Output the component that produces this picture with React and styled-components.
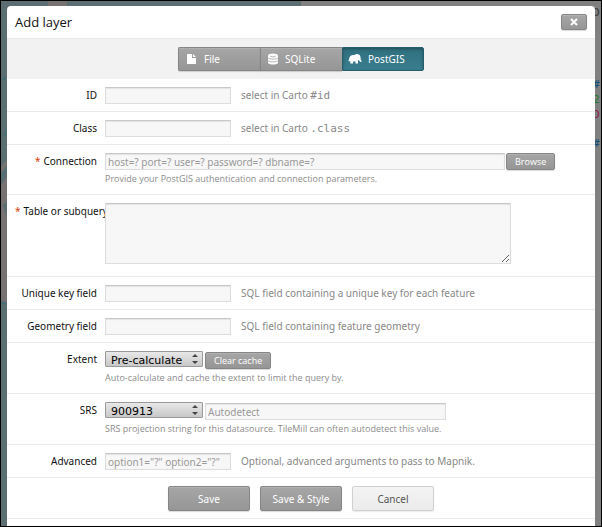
import React from "react";
import styled, { createGlobalStyle, css } from "styled-components";

const Global = createGlobalStyle`
  *, *::before, *::after { box-sizing: border-box; }
  body { margin: 0; }
  body, button, input, select, textarea { font-family: "Noto Sans", "Open Sans", sans-serif; }
`;

const Screen = styled.div`
  position: relative;
  height: 100vh;
  padding: 5px 6px 0;
  overflow: hidden;
  border: 1px solid #000;
  background: linear-gradient(90deg, #5b6e72 50%, #808080 50%);
`;

const MapArt = styled.svg`
  position: absolute;
  top: 0;
  left: 0;
`;

const Code = styled.pre`
  position: absolute;
  top: -11px;
  right: 0;
  width: 100px;
  height: 160px;
  margin: 0;
  overflow: hidden;
  font: 11px/15px "DejaVu Sans Mono", monospace;
  color: #333;
`;

const CodeLine = styled.span`
  position: absolute;
  top: ${(p) => p.$top}px;
  left: ${(p) => p.$left}px;
  color: ${(p) => p.$color};
`;

const Modal = styled.form`
  position: relative;
  min-height: 100%;
  border-radius: 4px 4px 0 0;
  background: #fff;
`;

const Header = styled.header`
  display: flex;
  align-items: center;
  justify-content: space-between;
  height: 32px;
  padding: 0 8px;
`;

const Title = styled.h1`
  margin: 0;
  font-family: "Open Sans", sans-serif;
  font-size: 13px;
  font-weight: 400;
  line-height: 20px;
  color: #111;
`;

const Toolbar = styled.nav`
  display: flex;
  justify-content: center;
  padding: 8px 0;
  border-top: 1px solid #e8e8e8;
  background: #f2f2f2;
`;

const grey = css`
  border: 1px solid #868686;
  border-radius: 2px;
  background: linear-gradient(#a6a6a6, #969696);
  box-shadow: inset 0 1px 0 #b0b0b0, 0 1px 1px rgba(0, 0, 0, 0.15);
  color: #fff;
`;

const Tab = styled.button`
  ${grey}
  display: flex;
  align-items: center;
  gap: 6px;
  width: 82px;
  height: 24px;
  padding: 0 5px;
  border-right-width: 0;
  border-radius: 0;
  font-size: 10px;
  &:first-child { padding-left: 6px; border-radius: 2px 0 0 2px; }
  &:nth-child(2) { padding-left: 6px; }
  &:last-child { border-right-width: 1px; border-radius: 0 2px 2px 0; }
  ${(p) => p.$active && css`
    border-color: #245d6b;
    background: linear-gradient(#2f6f7e, #3a7f8f);
    box-shadow: inset 0 1px 3px rgba(0, 0, 0, 0.3);
  `}
`;

const CloseButton = styled.button`
  ${grey}
  display: flex;
  align-items: center;
  justify-content: center;
  width: 26px;
  height: 16px;
  padding: 0;
`;

const SmallButton = styled.button`
  ${grey}
  height: 17px;
  padding: 0 8px;
  font-family: "Open Sans", sans-serif;
  font-size: 9px;
  line-height: 15px;
  white-space: nowrap;
`;

const Row = styled.div`
  display: grid;
  grid-template-columns: 90px 1fr;
  column-gap: 8px;
  padding: 8px 0 ${(p) => p.$bottom || 7}px;
  border-bottom: 1px solid #ebebeb;
`;

const Label = styled.label`
  display: flex;
  justify-content: ${(p) => (p.$wide ? "flex-start" : "flex-end")};
  gap: 3px;
  padding-left: 8px;
  font-size: 10px;
  line-height: 16px;
  white-space: nowrap;
  color: #111;
`;

const Star = styled.span`
  color: #d63c0c;
`;

const Field = styled.div`
  position: relative;
  min-width: 0;
`;

const Line = styled.div`
  display: flex;
  align-items: flex-end;
  gap: ${(p) => p.$gap || 2}px;
`;

const box = css`
  border: 1px solid #ddd;
  border-top-color: #c8c8c8;
  border-radius: 0;
  outline: 0;
  background: #f7f7f7;
  box-shadow: inset 0 1px 1px rgba(0, 0, 0, 0.08);
  color: #222;
  font-size: 10px;
  &::placeholder { color: #999; opacity: 1; }
`;

const widths = { short: "126px", medium: "241px", long: "400px" };

const Input = styled.input`
  ${box}
  width: ${(p) => widths[p.$size || "short"]};
  height: 17px;
  padding: 0 2px;
`;

const TextArea = styled.textarea`
  ${box}
  display: block;
  width: 406px;
  height: 61px;
  resize: both;
`;

const SelectWrap = styled.span`
  position: relative;
  display: flex;
  padding-bottom: 2px;
`;

const Select = styled.select`
  appearance: none;
  width: 98px;
  height: 16px;
  padding: 1px 5px 0;
  border: 1px solid #999;
  border-radius: 1px;
  background: linear-gradient(#e8e8e8, #c8c8c8);
  color: #000;
  font-family: "DejaVu Sans", sans-serif;
  font-size: 11px;
  line-height: 16px;
`;

const Arrows = styled.svg`
  position: absolute;
  top: 3px;
  right: 5px;
  pointer-events: none;
`;

const Hint = styled.span`
  font-size: 10px;
  line-height: 17px;
  color: #888;
  code { font: 11px "DejaVu Sans Mono", monospace; }
`;

const Note = styled.p`
  margin: 3px 0 0;
  font-family: "Open Sans", sans-serif;
  font-size: 9px;
  line-height: 12px;
  color: #8c8c8c;
`;

const Footer = styled.footer`
  display: flex;
  justify-content: center;
  gap: 10px;
  padding: 8px 0 7px;
  border-bottom: 1px solid #ebebeb;
`;

const Action = styled.button`
  ${grey}
  width: 82px;
  height: 25px;
  padding: 0;
  font-size: 10px;
  ${(p) => p.$light && css`
    border-color: #d0d0d0;
    background: linear-gradient(#f4f4f4, #ebebeb);
    box-shadow: 0 1px 1px rgba(0, 0, 0, 0.08);
    color: #555;
  `}
`;

const FileIcon = () => (
  <svg width="13" height="12" viewBox="0 0 13 12" fill="#fff" aria-hidden="true">
    <path d="M2 1h5v4h4v6h-9zM8 1l3 3h-3z" />
  </svg>
);

const DatabaseIcon = () => (
  <svg width="12" height="12" viewBox="0 0 12 12" aria-hidden="true">
    <path d="M1 2.5C1 -.3 11 -.3 11 2.500v7c0 2.800-10 2.800-10 0z" fill="#fff" />
    <path d="M3 3c2 1.200 4 1.200 6 0M1 4.800c1 1.800 9 1.800 10 0M1 7.500c1 1.800 9 1.800 10 0" fill="none" stroke="#a0a0a0" strokeWidth=".8" />
  </svg>
);

const ElephantIcon = () => (
  <svg width="14" height="12" viewBox="0 0 14 12" fill="#fff" aria-hidden="true">
    <path d="M.2 7.800C1 7.500 1 6.500 1.300 5C1.800 2.500 4 1.500 6.500 2C7.500.8 10 .8 11.200 1.700C12.500 2.500 12.600 4.500 12.700 6C12.800 7.500 13.200 8 14 7.800C13.800 9.200 12 9.400 11.300 7.800L10.800 7L10 7.500V10.500H7.500V8.500H5V10.500H2.300V7.500C1.800 8.600 1 8.800.2 7.800z" />
  </svg>
);

const SelectField = ({ id, value }) => (
  <SelectWrap>
    <Select id={id} defaultValue={value}>
      <option>{value}</option>
    </Select>
    <Arrows width="6" height="10" viewBox="0 0 6 10" aria-hidden="true">
      <path d="M0 3L3 0l3 3zM0 7l3 3 3-3z" fill="#444" />
    </Arrows>
  </SelectWrap>
);

const FormRow = ({ id, label, required, wide, bottom, note, gap, children }) => (
  <Row $bottom={bottom}>
    <Label htmlFor={id} $wide={wide}>
      {required && <Star>*</Star>}
      {label}
    </Label>
    <Field>
      <Line $gap={gap}>{children}</Line>
      {note && <Note>{note}</Note>}
    </Field>
  </Row>
);

const codeLines = [
  { top: 15, left: 92, color: "#333", text: "D" },
  { top: 87, left: 92, color: "#164e78", text: "#" },
  { top: 102, left: 92, color: "#217a21", text: "2" },
  { top: 117, left: 92, color: "#8c1a4b", text: "D" },
  { top: 146, left: 92, color: "#164e78", text: "#" },
];

export default function App() {
  return (
    <>
      <Global />
      <Screen>
        <MapArt width="100" height="527" aria-hidden="true">
          <path d="M47 0h19v5H47zM0 165l6-6v6l-6 6zM0 184l6-8v24l-4 4 4 12v8l-6 6zM0 230l6-6v78l-6-3z" fill="#777272" />
          <path d="M0 79l4-3v3M6 128l-3 5 3 2M0 176l6-7M0 302l6 1" fill="none" stroke="#3d6f78" />
        </MapArt>
        <Code aria-hidden="true">
          {codeLines.map((l) => (
            <CodeLine key={l.top} $top={l.top} $left={l.left} $color={l.color}>{l.text}</CodeLine>
          ))}
        </Code>
        <Modal onSubmit={(e) => e.preventDefault()}>
          <Header>
            <Title>Add layer</Title>
            <CloseButton type="button" aria-label="Close">
              <svg width="8" height="8" viewBox="0 0 8 8" aria-hidden="true">
                <path d="M1 1l6 6M7 1L1 7" stroke="#fff" strokeWidth="2" />
              </svg>
            </CloseButton>
          </Header>
          <Toolbar>
            <Tab type="button"><FileIcon />File</Tab>
            <Tab type="button"><DatabaseIcon />SQLite</Tab>
            <Tab type="button" $active><ElephantIcon />PostGIS</Tab>
          </Toolbar>
          <FormRow id="layer-id" label="ID" gap={10}>
            <Input id="layer-id" />
            <Hint>select in Carto <code>#id</code></Hint>
          </FormRow>
          <FormRow id="layer-class" label="Class" gap={10}>
            <Input id="layer-class" />
            <Hint>select in Carto <code>.class</code></Hint>
          </FormRow>
          <FormRow id="connection" label="Connection" required bottom={9} gap={1} note="Provide your PostGIS authentication and connection parameters.">
            <Input id="connection" $size="long" placeholder="host=? port=? user=? password=? dbname=?" />
            <SmallButton type="button">Browse</SmallButton>
          </FormRow>
          <FormRow id="table" label="Table or subquery" required wide bottom={12}>
            <TextArea id="table" />
          </FormRow>
          <FormRow id="unique-key" label="Unique key field" gap={10}>
            <Input id="unique-key" />
            <Hint>SQL field containing a unique key for each feature</Hint>
          </FormRow>
          <FormRow id="geometry" label="Geometry field" gap={10}>
            <Input id="geometry" />
            <Hint>SQL field containing feature geometry</Hint>
          </FormRow>
          <FormRow id="extent" label="Extent" bottom={9} note="Auto-calculate and cache the extent to limit the query by.">
            <SelectField id="extent" value="Pre-calculate" />
            <SmallButton type="button">Clear cache</SmallButton>
          </FormRow>
          <FormRow id="srs" label="SRS" bottom={9} note="SRS projection string for this datasource. TileMill can often autodetect this value.">
            <SelectField id="srs" value="900913" />
            <Input $size="medium" aria-label="SRS projection string" placeholder="Autodetect" />
          </FormRow>
          <FormRow id="advanced" label="Advanced" gap={10}>
            <Input id="advanced" placeholder={'option1="?" option2="?"'} />
            <Hint>Optional, advanced arguments to pass to Mapnik.</Hint>
          </FormRow>
          <Footer>
            <Action type="submit">Save</Action>
            <Action type="button">Save &amp; Style</Action>
            <Action type="button" $light>Cancel</Action>
          </Footer>
        </Modal>
      </Screen>
    </>
  );
}
